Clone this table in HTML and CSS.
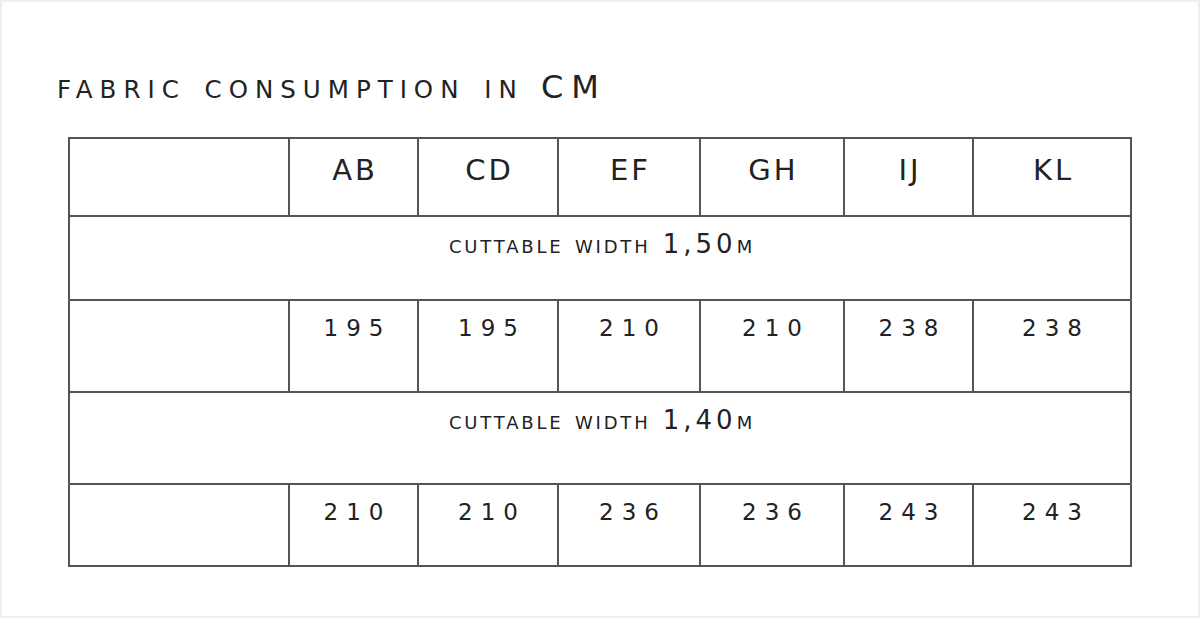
FILE: index.html
```html
<!DOCTYPE html>
<html lang="en">
<head>
<meta charset="utf-8">
<title>Fabric consumption in CM</title>
<link rel="stylesheet" href="styles.css">
</head>
<body>
<div class="page">
  <h1 class="title"><span class="sc">fabric consumption in</span> <span class="big">CM</span></h1>
  <div class="grid">
    <div class="cell head"></div>
    <div class="cell head">AB</div>
    <div class="cell head">CD</div>
    <div class="cell head">EF</div>
    <div class="cell head">GH</div>
    <div class="cell head">IJ</div>
    <div class="cell head">KL</div>

    <div class="cell section"><span class="sc">cuttable width</span> 1,50<span class="sc">m</span></div>

    <div class="cell num"></div>
    <div class="cell num">195</div>
    <div class="cell num">195</div>
    <div class="cell num">210</div>
    <div class="cell num">210</div>
    <div class="cell num">238</div>
    <div class="cell num">238</div>

    <div class="cell section"><span class="sc">cuttable width</span> 1,40<span class="sc">m</span></div>

    <div class="cell num last"></div>
    <div class="cell num last">210</div>
    <div class="cell num last">210</div>
    <div class="cell num last">236</div>
    <div class="cell num last">236</div>
    <div class="cell num last">243</div>
    <div class="cell num last">243</div>
  </div>
</div>
</body>
</html>
```

FILE: styles.css
```css
html, body {
  margin: 0;
  padding: 0;
  background: #ffffff;
}

.page {
  box-sizing: border-box;
  width: 1200px;
  height: 618px;
  border: 2px solid #efefef;
  background: #ffffff;
  font-family: "DejaVu Sans", "Liberation Sans", sans-serif;
  color: #222222;
}

.title {
  margin: 0 0 34px 0;
  padding: 69px 0 0 55px;
  height: 32px;
  font-size: 32px;
  line-height: 32px;
  font-weight: normal;
  white-space: nowrap;
}

.title .sc {
  text-transform: uppercase;
  font-size: 24.5px;
  letter-spacing: 7px;
  word-spacing: 4px;
}

.title .big {
  margin-left: 7px;
  letter-spacing: 8px;
}

.grid {
  display: grid;
  grid-template-columns: 218px 127px 138px 140px 142px 127px 156px;
  grid-template-rows: 76px 82px 90px 90px 80px;
  gap: 2px;
  padding: 2px;
  background: #555555;
  width: 1064px;
  box-sizing: border-box;
  margin-left: 66px;
}

.cell {
  background: #ffffff;
  text-align: center;
  box-sizing: border-box;
}

.head {
  font-size: 29px;
  line-height: 29px;
  letter-spacing: 3px;
  padding-left: 3px;
  padding-top: 17px;
}

.section {
  grid-column: 1 / -1;
  font-size: 26px;
  line-height: 26px;
  letter-spacing: 4px;
  padding-left: 4px;
  padding-top: 14px;
  white-space: nowrap;
}

.section .sc {
  text-transform: uppercase;
  font-size: 18px;
  letter-spacing: 2.8px;
  word-spacing: 3px;
}

.num {
  font-size: 23px;
  line-height: 23px;
  letter-spacing: 8px;
  padding-left: 8px;
  padding-top: 16px;
}
```
